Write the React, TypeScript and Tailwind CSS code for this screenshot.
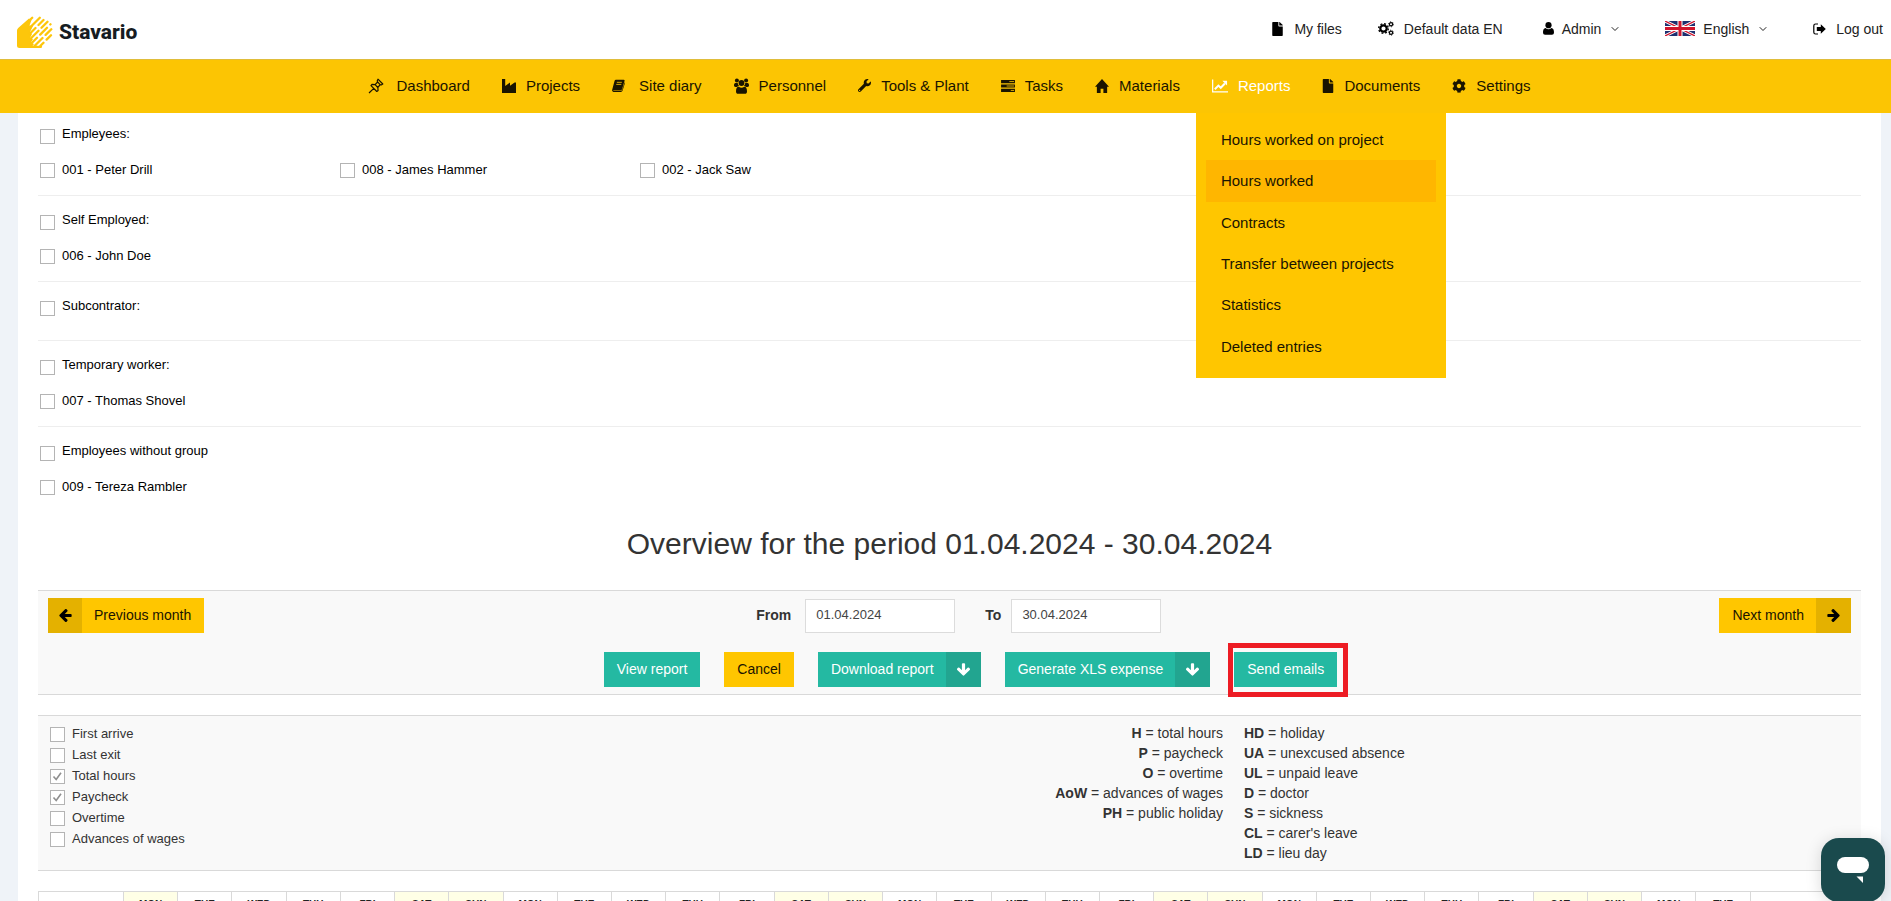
import { useId, useState, type ReactNode } from "react";
import { FaCog, FaFile, FaWrench } from "react-icons/fa";
import { FiChevronDown } from "react-icons/fi";

function ArrowIcon({ className }: { className: string }) {
  return (
    <svg viewBox="-160 64 1792 1792" className={`size-[15px] ${className}`} fill="currentColor" aria-hidden="true">
      <path d="M1472 960q0 54-37 91l-651 651q-39 37-91 37-51 0-90-37l-75-75q-38-38-38-91t38-91l293-293H117q-52 0-84.500-37.500T0 1024V896q0-53 32.500-90.500T117 768h704L528 474q-38-36-38-90t38-90l75-75q38-38 90-38 53 0 91 38l651 651q37 35 37 90z" />
    </svg>
  );
}

function PinIcon() {
  return (
    <svg viewBox="0 0 16 16" className="size-4" fill="none" stroke="currentColor" strokeWidth="1.200" strokeLinejoin="round" aria-hidden="true">
      <path d="M10 1.200L14.800 6l-1.600.9-1-.3-2.400 2.900.3 3-1.300 1L3 7.700l1-1.300 3.100.3L9.600 4l-.4-1.100zM5.800 10.400L1 15M9.600 4l2.600 2.600M7.100 6.700l2.700 2.800" />
    </svg>
  );
}

function FactoryIcon() {
  return (
    <svg viewBox="0 0 14 14" className="size-3.5" fill="currentColor" aria-hidden="true">
      <path d="M0 0h3.200v7L8 3.600v3.200l4.600-3.200H14V14H0z" />
    </svg>
  );
}

function BookIcon() {
  return (
    <svg viewBox="0 0 14 14" className="size-[13px]" aria-hidden="true">
      <path d="M4.200.8h8.300c.9 0 1.300.6 1 1.400l-2.600 8.500c-.3.9-.9 1.300-1.800 1.300H1.800c-.5 0-.7.500 0 .6h7.900c.7 0 1.100-.3 1.300-.9l2.600-8.200c.4.3.4.8.2 1.300l-2.400 7.700c-.3.9-1 1.400-1.900 1.400H1.700C.5 13.900-.2 12.700.2 11.600L2.800 2C3 1.200 3.500.8 4.200.8z" fill="currentColor" />
      <path d="M5.200 3.600h5.400M4.600 5.800H10" stroke="#fcc503" strokeWidth="0.9" />
    </svg>
  );
}

function PeopleIcon() {
  return (
    <svg viewBox="0 0 15 16" className="h-4 w-[15px]" fill="currentColor" aria-hidden="true">
      <circle cx="2.900" cy="2.500" r="2" />
      <circle cx="12.100" cy="2.500" r="2" />
      <circle cx="7.500" cy="5" r="2.900" />
      <path d="M1.500 5h2.200c.2 1.300.7 2.200 1.400 3-.9.1-1.600.4-2.100 1H1.500C.5 9 0 8.500 0 7.600 0 6.200.4 5 1.500 5zM13.500 5h-2.200c-.2 1.300-.7 2.200-1.400 3 .9.100 1.600.4 2.100 1h1.500c1 0 1.500-.5 1.500-1.400C15 6.200 14.600 5 13.500 5z" />
      <path d="M4.700 8.700c1.800 1.300 3.800 1.300 5.600 0 1.900 0 2.700 1.900 2.700 4.700 0 1.600-.8 2.400-2.100 2.400H4.100C2.800 15.800 2 15 2 13.400c0-2.800.8-4.700 2.700-4.700z" />
    </svg>
  );
}

function TasksIcon() {
  return (
    <svg viewBox="0 0 15 13" className="h-3 w-[14px]" aria-hidden="true">
      <path d="M0 0h15v3.400H0zM0 4.800h15v3.400H0zM0 9.600h15V13H0z" fill="currentColor" />
      <path d="M9 1.700h5M6 6.500h8M10.500 11.300H14" stroke="#fcc503" strokeWidth="0.9" />
    </svg>
  );
}

function HomeIcon() {
  return (
    <svg viewBox="0 0 15 15" className="size-3.5" fill="currentColor" aria-hidden="true">
      <path d="M7.500 0L15 8.200h-2V15H9V10.500H6V15H2V8.200H0z" />
    </svg>
  );
}

function ChartIcon() {
  return (
    <svg viewBox="0 0 17 14" className="h-3.5 w-[16px]" aria-hidden="true">
      <path d="M.7 0v13.300H17" fill="none" stroke="currentColor" strokeWidth="1.300" />
      <path d="M3 10.500l3.800-4 2.500 2.400 4.400-4.600" fill="none" stroke="currentColor" strokeWidth="2.100" />
      <path d="M11 1.500h5v5z" fill="currentColor" />
    </svg>
  );
}

function GearsIcon() {
  return (
    <svg viewBox="0 0 16 15" className="h-[15px] w-4" fill="none" stroke="currentColor" aria-hidden="true">
      <circle cx="5.500" cy="7.500" r="3.200" strokeWidth="2.200" />
      <circle cx="5.500" cy="7.500" r="4.800" strokeWidth="1.400" strokeDasharray="1.900 1.870" />
      <circle cx="13" cy="3.300" r="1.600" strokeWidth="1.200" />
      <circle cx="13" cy="3.300" r="2.500" strokeWidth="0.900" strokeDasharray="1.100 1.520" />
      <circle cx="13" cy="11.700" r="1.600" strokeWidth="1.200" />
      <circle cx="13" cy="11.700" r="2.500" strokeWidth="0.900" strokeDasharray="1.100 1.520" />
    </svg>
  );
}

function UserIcon() {
  return (
    <svg viewBox="0 0 11 13" className="h-[13px] w-[11px]" fill="currentColor" aria-hidden="true">
      <circle cx="5.500" cy="3.200" r="3.100" />
      <path d="M2.600 5.900c1.700 1.700 4.100 1.700 5.800 0C10.200 6 11 7.800 11 10.300c0 1.700-.8 2.500-2.100 2.500H2.100C.8 12.800 0 12 0 10.300 0 7.800.8 6 2.600 5.900z" />
    </svg>
  );
}

function SignOutIcon() {
  return (
    <svg viewBox="0 0 13 12" className="h-3 w-[13px]" aria-hidden="true">
      <path d="M5 1H2.600C1.500 1 .8 1.700.8 2.800v6.400C.8 10.300 1.500 11 2.600 11H5" fill="none" stroke="currentColor" strokeWidth="1.200" />
      <path d="M3.800 4h4V1.200L12.800 6l-5 4.800V8h-4z" fill="currentColor" />
    </svg>
  );
}

function FlagIcon() {
  return (
    <svg viewBox="0 0 60 30" className="h-[15px] w-[30px]" aria-hidden="true">
      <path d="M0 0h60v30H0z" fill="#1d2f6f" />
      <path d="M0 0l60 30M60 0L0 30" stroke="#fff" strokeWidth="6" />
      <path d="M0 0l60 30M60 0L0 30" stroke="#d0142c" strokeWidth="2.500" />
      <path d="M30 0v30M0 15h60" stroke="#fff" strokeWidth="10" />
      <path d="M30 0v30M0 15h60" stroke="#d0142c" strokeWidth="6" />
    </svg>
  );
}

function LogoMark() {
  return (
    <svg viewBox="0 0 36 32" className="h-8 w-9" aria-hidden="true">
      <path d="M0 14.500Q0 13 1.200 12L12 2.500 14.500 4l-2 5.500L16 10l-3 6 2 2-2 4 3 1-2 3.500 3 1.500-3 4H2.500Q0 32 0 29.500z" fill="#fdc60b" />
      <g stroke="#fdc60b" strokeWidth="2.300" strokeLinecap="round" fill="none">
        <path d="M11.500 5.500L15.200 1.800M12 12.500L22.800 1.700M13 17.500L18.500 12M21.500 9L26.500 4M13.500 22.800L21.500 14.800M24.500 11.800L30.500 5.800M14 27.800L20 21.800M23.200 18.600L30 11.800M33.300 8.500L33.500 8.300M17 30.500L25.500 22M28.600 18.900L34.300 13.200M23.200 30L26.500 26.700M29.600 23.600L34 19.200M26 18M24 30.800H14" />
      </g>
    </svg>
  );
}

function Check({
  label,
  defaultChecked = false,
  className,
  boxClass = "",
}: {
  label: string;
  defaultChecked?: boolean;
  className: string;
  boxClass?: string;
}) {
  const id = useId();
  return (
    <div className={`flex gap-[7px] text-[13px] ${className}`}>
      <span className={`relative size-[15px] shrink-0 ${boxClass}`}>
        <input
          id={id}
          type="checkbox"
          defaultChecked={defaultChecked}
          className="peer block size-[15px] appearance-none border border-[#b4b4b4] bg-white"
        />
        <svg
          viewBox="0 0 15 15"
          className="pointer-events-none absolute inset-0 hidden size-[15px] peer-checked:block"
          fill="none"
          stroke="#8f8f8f"
          strokeWidth="1.600"
          aria-hidden="true"
        >
          <path d="M3.500 7.500l2.700 3L11 3.800" />
        </svg>
      </span>
      <label htmlFor={id}>{label}</label>
    </div>
  );
}

const navItems: { label: string; icon: ReactNode; gap: string }[] = [
  { label: "Dashboard", icon: <PinIcon />, gap: "gap-3" },
  { label: "Projects", icon: <FactoryIcon />, gap: "gap-2.5" },
  { label: "Site diary", icon: <BookIcon />, gap: "gap-3.5" },
  { label: "Personnel", icon: <PeopleIcon />, gap: "gap-2.5" },
  { label: "Tools & Plant", icon: <FaWrench className="size-[13px]" />, gap: "gap-2.5" },
  { label: "Tasks", icon: <TasksIcon />, gap: "gap-2.5" },
  { label: "Materials", icon: <HomeIcon />, gap: "gap-2.5" },
  { label: "Reports", icon: <ChartIcon />, gap: "gap-2.5" },
  { label: "Documents", icon: <FaFile className="h-3.5 w-3" />, gap: "gap-2.5" },
  { label: "Settings", icon: <FaCog className="size-3.5" />, gap: "gap-2.5" },
];

const reportItems = [
  "Hours worked on project",
  "Hours worked",
  "Contracts",
  "Transfer between projects",
  "Statistics",
  "Deleted entries",
];

const groups = [
  { title: "Empleyees:", members: ["001 - Peter Drill", "008 - James Hammer", "002 - Jack Saw"] },
  { title: "Self Employed:", members: ["006 - John Doe"] },
  { title: "Subcontrator:", members: [] },
  { title: "Temporary worker:", members: ["007 - Thomas Shovel"] },
  { title: "Employees without group", members: ["009 - Tereza Rambler"] },
];

const columns = [
  { label: "First arrive", on: false },
  { label: "Last exit", on: false },
  { label: "Total hours", on: true },
  { label: "Paycheck", on: true },
  { label: "Overtime", on: false },
  { label: "Advances of wages", on: false },
];

const legendLeft = [
  ["H", "total hours"],
  ["P", "paycheck"],
  ["O", "overtime"],
  ["AoW", "advances of wages"],
  ["PH", "public holiday"],
];

const legendRight = [
  ["HD", "holiday"],
  ["UA", "unexcused absence"],
  ["UL", "unpaid leave"],
  ["D", "doctor"],
  ["S", "sickness"],
  ["CL", "carer's leave"],
  ["LD", "lieu day"],
];

const weekdays = ["MON", "TUE", "WED", "THU", "FRI", "SAT", "SUN"];
const days = Array.from({ length: 30 }, (_, i) => ({
  name: weekdays[i % 7],
  off: i === 0 || i % 7 > 4,
}));

function DateField({ label, initial, gap }: { label: string; initial: string; gap: string }) {
  const id = useId();
  const [value, setValue] = useState(initial);
  return (
    <div className={`flex items-center ${gap}`}>
      <label htmlFor={id} className="pb-0.5 font-bold">
        {label}
      </label>
      <input
        id={id}
        type="text"
        value={value}
        onChange={(e) => setValue(e.target.value)}
        className="h-[34px] w-[150px] border border-[#dcdcdc] bg-white px-2.5 pb-0.5 text-[13px] text-[#444]"
      />
    </div>
  );
}

function SplitButton({ label }: { label: string }) {
  return (
    <button type="button" className="flex h-[35px] items-center bg-[#24b9a2] pl-[13px] text-white">
      <span className="pb-0.5">{label}</span>
      <span className="ml-3 flex h-full w-[35px] items-center justify-center bg-[#22a590]">
        <ArrowIcon className="rotate-90" />
      </span>
    </button>
  );
}

export default function App() {
  return (
    <div className="h-screen overflow-hidden bg-[#eff3f8] font-['Liberation_Sans',Arial,sans-serif] text-sm text-black">
      <header className="flex h-[59px] items-center justify-between bg-white pr-2 pl-[17px]">
        <a href="#home" className="flex items-center gap-1.5 pt-1">
          <LogoMark />
          <span className="font-[Roboto,sans-serif] text-[21px] font-extrabold text-[#161c22]">Stavario</span>
        </a>
        <div className="flex items-center pb-0.5 text-[#222]">
          <a href="#files" className="flex items-center gap-2.5">
            <FaFile className="h-3.5 w-[13px] text-black" />
            My files
          </a>
          <a href="#data" className="ml-9 flex items-center gap-2.5">
            <span className="text-black">
              <GearsIcon />
            </span>
            Default data EN
          </a>
          <button type="button" className="ml-10 flex items-center gap-2">
            <span className="text-black">
              <UserIcon />
            </span>
            Admin
            <FiChevronDown className="size-3" />
          </button>
          <button type="button" className="ml-11 flex items-center gap-2">
            <FlagIcon />
            English
            <FiChevronDown className="size-3" />
          </button>
          <a href="#logout" className="ml-11 flex items-center gap-2.5">
            <span className="text-black">
              <SignOutIcon />
            </span>
            Log out
          </a>
        </div>
      </header>

      <nav className="relative z-10 flex h-[54px] justify-center border-t border-[#e0bd3a] bg-[#fcc503] pl-2 text-[15px]">
        {navItems.map((item) => {
          const active = item.label === "Reports";
          return (
            <div key={item.label} className="relative">
              <a
                href={`#${item.label}`}
                className={`flex h-full items-center px-4 pb-0.5 ${item.gap} ${active ? "text-white" : "text-[#1a1400]"}`}
              >
                {item.icon}
                {item.label}
              </a>
              {active && (
                <ul className="absolute top-full left-0 flex h-[265px] w-[250px] flex-col bg-[#ffc600] px-2.5 pt-1.5 pb-[11px]">
                  {reportItems.map((label) => (
                    <li key={label} className="flex-1">
                      <a
                        href={`#${label}`}
                        className={`flex h-full items-center px-[15px] text-[#1a1400] ${
                          label === "Hours worked" ? "bg-[#ffb600]" : ""
                        }`}
                      >
                        {label}
                      </a>
                    </li>
                  ))}
                </ul>
              )}
            </div>
          );
        })}
      </nav>

      <main className="mr-2.5 ml-[18px] bg-white px-5 pb-10">
        {groups.map((group, i) => (
          <section
            key={group.title}
            className={`${i === 0 ? "pt-3" : "pt-[15px]"} ${
              i === groups.length - 1 ? "" : "border-b border-[#eee]"
            } ${i === groups.length - 1 ? "pb-0" : group.members.length ? "pb-4" : "pb-6"}`}
          >
            <Check label={group.title} className="h-[19px] items-start pl-0.5 leading-[18px]" boxClass="mt-1" />
            {group.members.length > 0 && (
              <div className="mt-[17px] flex">
                {group.members.map((m) => (
                  <Check key={m} label={m} className="w-[300px] items-start pl-0.5 leading-[18px]" boxClass="mt-0.5" />
                ))}
              </div>
            )}
          </section>
        ))}

        <h2 className="mt-[30px] mb-7 text-center text-[30px] leading-9 text-[#333]">
          Overview for the period 01.04.2024 - 30.04.2024
        </h2>

        <section className="border-y border-[#d9d9d9] bg-[#f9f9f9] px-2.5 py-[7px] text-[#333]">
          <div className="flex items-center">
            <button type="button" className="flex h-[35px] items-center bg-[#ffc600] pr-[13px] text-[#1a1400]">
              <span className="mr-3 flex h-full w-[34px] items-center justify-center bg-[#e4b100] text-black">
                <ArrowIcon className="rotate-180" />
              </span>
              <span className="pb-0.5">Previous month</span>
            </button>
            <div className="flex flex-1 items-center justify-center gap-[30px] pr-1.5">
              <DateField label="From" initial="01.04.2024" gap="gap-3.5" />
              <DateField label="To" initial="30.04.2024" gap="gap-2.5" />
            </div>
            <button type="button" className="flex h-[35px] items-center bg-[#ffc600] pl-[13px] text-[#1a1400]">
              <span className="pb-0.5">Next month</span>
              <span className="ml-3 flex h-full w-[35px] items-center justify-center bg-[#e4b100] text-black">
                <ArrowIcon className="" />
              </span>
            </button>
          </div>
          <div className="mt-[19px] flex items-center justify-center gap-6 pl-[42px]">
            <button type="button" className="h-[35px] bg-[#24b9a2] px-[13px] pb-0.5 text-white">
              View report
            </button>
            <button type="button" className="h-[35px] bg-[#ffc600] px-[13px] pb-0.5 text-[#1a1400]">
              Cancel
            </button>
            <SplitButton label="Download report" />
            <SplitButton label="Generate XLS expense" />
            <div className="relative">
              <button type="button" className="block h-[35px] bg-[#24b9a2] px-[13px] pb-0.5 text-white">
                Send emails
              </button>
              <span className="pointer-events-none absolute -top-[9px] -right-[11px] -bottom-2.5 -left-1.5 border-5 border-[#ed1c24]" />
            </div>
          </div>
        </section>

        <section className="mt-5 flex border-y border-[#d9d9d9] bg-[#f9f9f9] py-[7px] text-[#333]">
          <div className="flex w-[65%] justify-between pl-3">
            <div className="pt-px">
              {columns.map((c) => (
                <Check key={c.label} label={c.label} defaultChecked={c.on} className="h-[21px] items-center" />
              ))}
            </div>
            <ul className="text-right leading-5">
              {legendLeft.map(([k, text]) => (
                <li key={k}>
                  <b>{k}</b> = {text}
                </li>
              ))}
            </ul>
          </div>
          <ul className="ml-[21px] leading-5">
            {legendRight.map(([k, text]) => (
              <li key={k}>
                <b>{k}</b> = {text}
              </li>
            ))}
          </ul>
        </section>

        <table className="mt-5 w-full table-fixed border-collapse text-[10px] text-[#222]">
          <thead>
            <tr className="h-7">
              <th className="w-[85px] border border-[#d9d9d9]" />
              {days.map((d, i) => (
                <th
                  key={i}
                  className={`border border-[#d9d9d9] p-0 pt-[7px] align-top leading-3 font-bold ${d.off ? "bg-[#ffffe6]" : ""}`}
                >
                  {d.name}
                </th>
              ))}
              <th className="w-[110px] border border-[#d9d9d9]" />
            </tr>
          </thead>
        </table>
      </main>

      <button
        type="button"
        aria-label="Open chat"
        className="fixed right-1.5 -bottom-px z-20 flex size-16 items-center justify-center rounded-[18px] bg-[#1a4a4d] shadow-[0_2px_16px_rgba(0,0,0,0.15)]"
      >
        <svg viewBox="0 0 32 26" className="h-[26px] w-8" fill="#fff" aria-hidden="true">
          <rect width="32" height="16" rx="8" />
          <path d="M19.500 19.500H26V26z" />
        </svg>
      </button>
    </div>
  );
}
